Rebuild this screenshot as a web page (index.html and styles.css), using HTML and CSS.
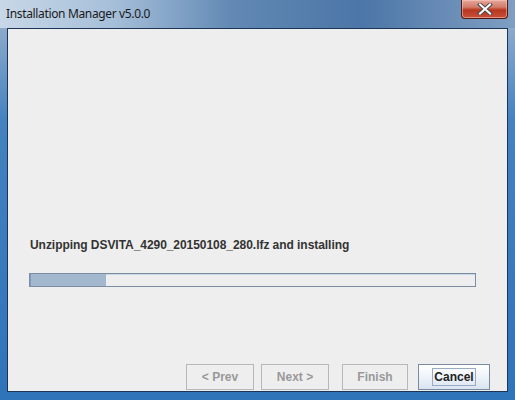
FILE: index.html
```html
<!DOCTYPE html>
<html>
<head>
<meta charset="utf-8">
<link rel="stylesheet" href="styles.css">
</head>
<body>
<div class="window">
  <div class="titlebar">
    <span class="title">Installation Manager v5.0.0</span>
    <div class="close">
      <svg width="16" height="12" viewBox="0 0 16 12"><path d="M3 1.5 L13 10.5 M13 1.5 L3 10.5" stroke="#4b4b4b" stroke-width="4" stroke-linecap="square"/><path d="M3 1.5 L13 10.5 M13 1.5 L3 10.5" stroke="#ffffff" stroke-width="2" stroke-linecap="square"/></svg>
    </div>
  </div>
  <div class="client">
    <div class="spacer"></div>
    <div class="status">Unzipping DSVITA_4290_20150108_280.lfz and installing</div>
    <div class="progress"><div class="fill" style="width:17%"></div></div>
    <div class="spacer2"></div>
    <div class="buttons">
      <button class="btn disabled prev">&lt; Prev</button>
      <button class="btn disabled next">Next &gt;</button>
      <button class="btn disabled finish">Finish</button>
      <button class="btn cancel"><span class="focus">Cancel</span></button>
    </div>
  </div>
</div>
</body>
</html>
```

FILE: styles.css
```css
html, body { margin: 0; padding: 0; }
body { width: 515px; height: 400px; overflow: hidden; background: #fff; }
.window {
  width: 515px; height: 400px; box-sizing: border-box;
  display: flex; flex-direction: column;
  background: linear-gradient(180deg, #b3c8de 0px, #8aa9cb 30px, #4482c0 120px, #2f73b9 400px);
  padding: 0 7px 8px 7px;
  position: relative;
}
.window::before {
  content: ""; position: absolute; left: 0; top: 0; right: 0; height: 28px;
  background: linear-gradient(90deg, #c8d7e7 0%, #a6bfd9 22%, #6289b4 45%, #4c76a7 70%, #7f9ec2 100%);
}
.titlebar {
  height: 28px; flex: none; display: flex; align-items: flex-start;
  position: relative; margin: 0 -7px; padding-left: 6px;
}
.title {
  font-family: "Noto Sans", "DejaVu Sans", sans-serif; font-size: 12px; color: #1a1a1a;
  margin-top: 6px; line-height: 16px; letter-spacing: -0.35px;
}
.close {
  position: absolute; left: 461px; top: 0; width: 47px; height: 19px;
  box-sizing: border-box; border: 1px solid #4f1a14; border-top: none;
  border-radius: 0 0 4px 4px;
  background: linear-gradient(180deg, #e6a79b 0%, #d27a68 40%, #b8361f 55%, #c8503a 100%);
  box-shadow: inset 0 0 0 1px rgba(255,210,200,0.5);
  display: flex; align-items: center; justify-content: center;
}
.client {
  flex: 1; background: #eeeeee; border: 1px solid #1b3556;
  display: flex; flex-direction: column;
  font-family: "Liberation Sans", Arial, sans-serif;
}
.spacer { height: 209px; flex: none; }
.status {
  font-size: 12px; font-weight: bold; color: #333333; margin-left: 22px; line-height: 14px;
  letter-spacing: -0.05px;
}
.progress {
  margin: 21px 0 0 21px; width: 447px; height: 14px; box-sizing: border-box;
  border: 1px solid #7b8ca3; background: #eeeeee;
  box-shadow: inset 0 1px 0 #c8d6e6;
}
.fill { height: 100%; background: #a3b8cf; box-shadow: inset 1px 0 0 #7f9cc0; }
.spacer2 { flex: 1; }
.buttons {
  display: flex; justify-content: flex-end; padding-right: 17px; margin-bottom: 1px;
}
.btn {
  height: 26px; box-sizing: border-box; font-family: "Liberation Sans", Arial, sans-serif;
  font-size: 12px; font-weight: bold; padding: 0; margin: 0;
  display: flex; align-items: center; justify-content: center;
}
.disabled { border: 1px solid #b8b8b8; background: #eeeeee; color: #999999; }
.prev { width: 68px; }
.next { width: 68px; margin-left: 7px; }
.finish { width: 66px; margin-left: 13px; }
.cancel {
  width: 72px; margin-left: 10px; color: #222; border: 1px solid #7a8aa0;
  background: linear-gradient(180deg, #ffffff 0%, #eef3f9 50%, #d9e4f1 100%);
}
.focus { border: 1px solid #99aac4; padding: 1px 1px; line-height: 14px; }
```
